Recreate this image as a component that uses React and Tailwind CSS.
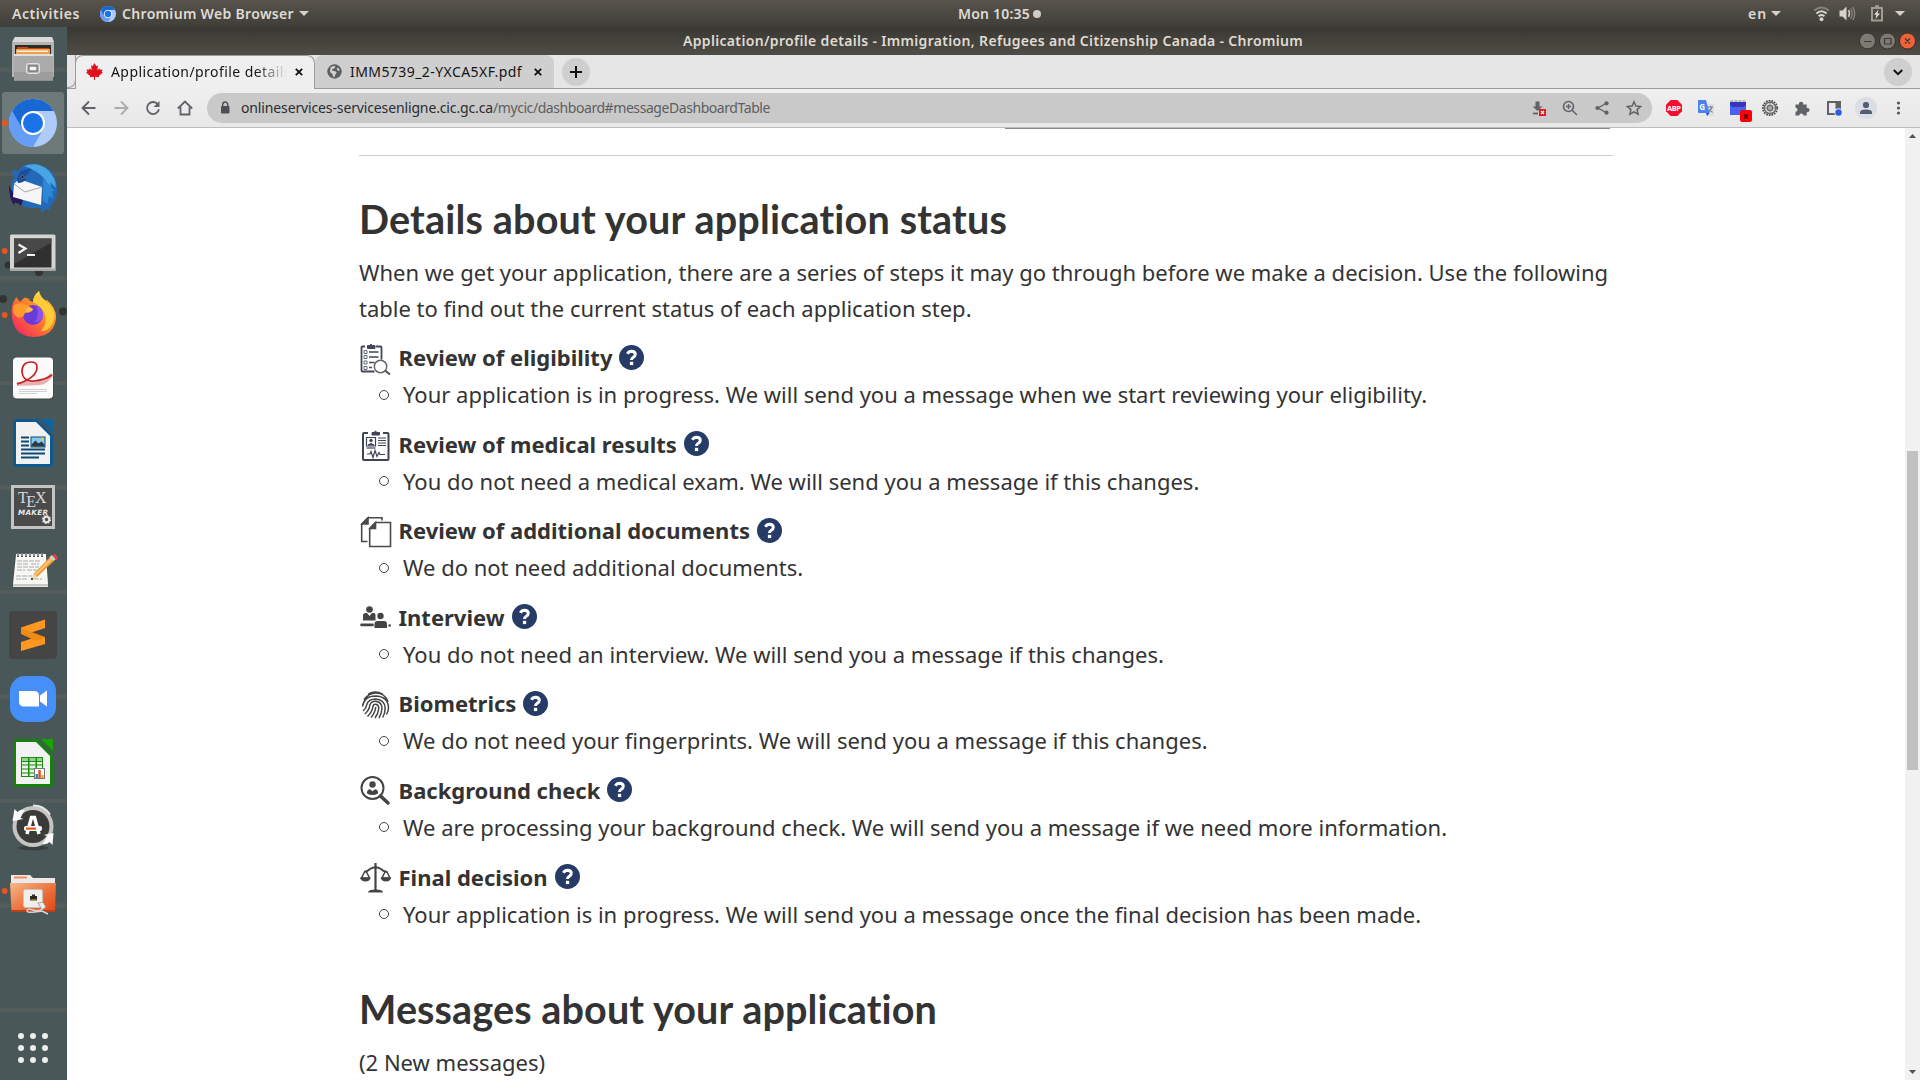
import { useLayoutEffect, useRef, useState } from "react";

/* Single-line label that tracks its letters to fill a given width. */
function Label({ width, className = "", children }) {
  const ref = useRef(null);
  const [spacing, setSpacing] = useState(0);
  useLayoutEffect(() => {
    const el = ref.current;
    const natural = el.getBoundingClientRect().width - spacing * el.textContent.length;
    setSpacing((width - natural) / el.textContent.length);
  }, [width]);
  return (
    <span ref={ref} className={`inline-block whitespace-nowrap ${className}`} style={{ letterSpacing: `${spacing}px` }}>
      {children}
    </span>
  );
}

function ChromiumMark({ className }) {
  return (
    <svg viewBox="0 0 48 48" className={className}>
      <circle cx="24" cy="24" r="24" fill="#aecbfa" />
      <path d="M24 24 L3.2 12 A24 24 0 0 0 24 48 L34.4 30 Z" fill="#669df6" />
      <path d="M3.2 12 A24 24 0 0 1 44.8 12 L24 12 L13.6 30 Z" fill="#1967d2" />
      <circle cx="24" cy="24" r="12" fill="#fff" />
      <circle cx="24" cy="24" r="9.7" fill="#1a73e8" />
    </svg>
  );
}

function TopBar() {
  return (
    <header className="flex h-[27px] items-center bg-linear-to-b from-[#58544c] to-[#403e39] text-[14px] leading-[27px] font-semibold text-[#dfdbd2]">
      <Label width={68} className="ml-3">Activities</Label>
      <ChromiumMark className="ml-5 size-4" />
      <Label width={172} className="ml-[6px]">Chromium Web Browser</Label>
      <Caret className="ml-[5px]" />
      <Label width={72} className="ml-[649px]">Mon 10:35</Label>
      <span className="ml-[3px] size-2 rounded-full bg-[#d0ccc4]" />
      <Label width={19} className="ml-[707px]">en</Label>
      <Caret className="ml-1" />
      <svg className="ml-8 h-[17px] w-[17px]" viewBox="0 0 17 17" fill="none" strokeWidth="2">
        <path d="M1.2 5.6 Q8.5 -0.6 15.8 5.6" stroke="#85827b" />
        <path d="M3.4 8.6 Q8.5 4 13.6 8.6" stroke="#d6d2ca" />
        <path d="M5.6 11.2 Q8.5 8.8 11.4 11.2" stroke="#d6d2ca" />
        <circle cx="8.5" cy="14.2" r="2" fill="#d6d2ca" />
      </svg>
      <svg className="ml-[9px] h-[17px] w-[17px]" viewBox="0 0 17 17" fill="none">
        <path d="M0.5 5.5h3L7.5 1.5v14l-4-4h-3z" fill="#d6d2ca" />
        <path d="M9.5 5.2q2 3.3 0 6.6" stroke="#d6d2ca" strokeWidth="1.4" />
        <path d="M11.6 3.4q3 5.1 0 10.2M13.7 1.8q4 6.7 0 13.4" stroke="#85827b" strokeWidth="1.4" />
      </svg>
      <svg className="ml-[14px] h-[17px] w-[14px]" viewBox="0 0 14 17" fill="none">
        <path d="M2 3h10v12.5H2zM5 1.2h4" stroke="#a09c94" strokeWidth="2" />
        <path d="M8.6 4.5 4 9.8h2.4L5.4 14 10 8.6H7.4z" fill="#e4e0d8" />
      </svg>
      <Caret className="ml-[11px]" />
    </header>
  );
}

function Caret({ className }) {
  return (
    <svg className={`h-[5px] w-[10px] ${className}`} viewBox="0 0 10 5">
      <path d="M0 0h10L5 5z" fill="#d6d2ca" />
    </svg>
  );
}

const DOCK_ICONS = [
  {
    name: "Files",
    art: (
      <>
        <path d="M15 37h37l2 6v34H12V43z" fill="#b4b4b4" />
        <path d="M15 37h37l2 5H12z" fill="#d8d8d8" />
        <rect x="15" y="45" width="36" height="10" fill="#2d2a28" />
        <path d="M17 47h10l2 1h20v3H17z" fill="#c4481a" />
        <rect x="16" y="49" width="34" height="6" fill="#f0a04a" />
        <rect x="17" y="50.500" width="31" height="1.500" fill="#fff3dc" />
        <path d="M14 54h39v26.500H14z" fill="#ababab" />
        <path d="M14 54h39v2H14z" fill="#dedede" />
        <path d="M14 72h39v8.500H14z" fill="#9d9d9d" />
        <rect x="26.500" y="63.500" width="13" height="10" rx="2" fill="#b5b5b5" stroke="#e4e4e4" />
        <rect x="29" y="66" width="8" height="5" fill="#f4f4f4" stroke="#555" />
      </>
    ),
  },
  {
    name: "Chromium",
    running: 123,
    art: (
      <>
        <rect x="2" y="92" width="62" height="62" rx="3" fill="#6e797a" />
        <svg x="9" y="99" width="48" height="48" viewBox="0 0 48 48">
          <circle cx="24" cy="24" r="24" fill="#aecbfa" />
          <path d="M24 24 L3.200 12 A24 24 0 0 0 24 48 L34.400 30 Z" fill="#669df6" />
          <path d="M3.200 12 A24 24 0 0 1 44.800 12 L24 12 L13.600 30 Z" fill="#1967d2" />
          <circle cx="24" cy="24" r="12" fill="#fff" />
          <circle cx="24" cy="24" r="10" fill="#1a73e8" />
        </svg>
      </>
    ),
  },
  {
    name: "Thunderbird",
    art: (
      <>
        <path d="M10 172q4-3 8-1 6-9 17-7q16 2 20 14l2 8q1 12-5 18l-3 6-2-1-6 4 0-5-12 0q-14-4-18-16q-1-9 4-16z" fill="#2469b8" />
        <path d="M24 166q14-5 24 4q8 8 8 18l-6-6 2 10-8-14q-8-8-20-12z" fill="#47a5e4" />
        <path d="M9 185q4 11 14 15l-2 6q-3-4-7-3l1 3q-6-5-6-21z" fill="#261a5c" />
        <path d="M14 184l5-5 23 8-1 18-28-8z" fill="#f6f6f6" />
        <path d="M14 184l11 8 17-5" stroke="#a8a8a8" fill="none" />
        <path d="M17 180q2-13 15-11l-8 9 3 1q-4 4-9 4z" fill="#1b4f9c" />
        <circle cx="22.500" cy="177" r="1.600" fill="#1b1b2c" stroke="#a07048" strokeWidth=".8" />
        <path d="M43 178l12 13-3 0 1 7-4-2-2 8-4-4z" fill="#2e86d6" />
      </>
    ),
  },
  {
    name: "Terminal",
    running: 251,
    art: (
      <>
        <circle cx="8" cy="265" r="3.500" fill="#303331" />
        <circle cx="39" cy="272" r="4" fill="#303331" />
        <rect x="10" y="234.500" width="45.500" height="36.500" rx="1.500" fill="#d4d4d2" />
        <rect x="10" y="268.500" width="45.500" height="2.500" fill="#a8a8a6" />
        <rect x="14" y="238.500" width="37.500" height="29" fill="#303030" />
        <path d="M14 238.500h37.500v4L14 264z" fill="#484848" />
        <path d="M18.500 244.500l7 4-7 4.500M27 255h8" stroke="#f2f2f2" strokeWidth="2.200" fill="none" />
      </>
    ),
  },
  {
    name: "Firefox",
    running: 315,
    art: (
      <>
        <circle cx="3" cy="299" r="4" fill="#303331" />
        <circle cx="63" cy="311.500" r="4" fill="#303331" />
        <path d="M13 303q2-3 3-6l4 5 4-4q4-1 6 3l3 1q0-6 6-11q1 6 7 10l1-1q9 8 9 17q-1 19-22 20q-20-1-22-20q-1-8 1-14z" fill="url(#fx)" />
        <path d="M33 302q0-6 6-11q1 6 7 10l1 3 1-1q9 10 5 19-4 10-12 9 7-8 4-17-4-8-12-12z" fill="#ffd43a" opacity=".85" />
        <circle cx="33" cy="315" r="10" fill="#6a3bd8" />
        <path d="M36 305q8 3 7 11-2 7-8 6 5-7 1-17z" fill="#8c52f0" />
        <path d="M14 305q8-5 19 4-1 4-8 4-2 6-8 4-6-4-3-12z" fill="#ff9a2e" />
        <path d="M28 307l5 2q-1 3-8 3z" fill="#ffbd4f" />
      </>
    ),
  },
  {
    name: "Document viewer",
    art: (
      <>
        <rect x="13.500" y="358.500" width="40" height="41" rx="4" fill="#30383a" opacity=".6" />
        <rect x="13" y="357.500" width="40" height="41" rx="4" fill="#fbfbfb" />
        <path d="M17 384q20-1 23-1 6 0 12-9" fill="none" stroke="#e8b0b0" strokeWidth="4" />
        <path d="M17 384q20-6 20-17 0-5-6-5-9 0-9 10 1 10 12 9 11-1 18-6" fill="none" stroke="#c72020" strokeWidth="1.700" />
        <path d="M19 389.500h28M19 391.500h28M19 393.500h18" stroke="#d0d0d0" />
      </>
    ),
  },
  {
    name: "LibreOffice Writer",
    art: (
      <>
        <path d="M15 419h27l11 12v33q0 3-3 3H16q-3 0-3-3v-42z" fill="#0d5a92" />
        <path d="M41 419h12v12z" fill="#12639c" />
        <path d="M39 420l14 14" stroke="#4a5557" strokeWidth="2" />
        <path d="M16 422h20l14 14v28H16z" fill="#f2f2f2" />
        <path d="M21 437.500h8M21 441.500h8M21 445.500h8M21 449.500h24M21 453.500h24M21 457.500h18" stroke="#0c4a78" strokeWidth="2" />
        <rect x="31" y="437" width="14" height="10" fill="#86c8f0" stroke="#0c4a78" />
        <path d="M31.500 446.500v-2l4-4 3 3 3-2 3 3v2z" fill="#2b3b42" />
        <circle cx="42.500" cy="439" r="1.600" fill="#f0c828" />
      </>
    ),
  },
  {
    name: "Texmaker",
    art: (
      <>
        <rect x="11" y="485" width="44" height="44" fill="#c3c3c3" />
        <rect x="14" y="488" width="38" height="38" fill="#4b4b4b" />
        <text x="18" y="503" fill="#dadada" fontFamily="Liberation Serif, serif" fontSize="16">
          T<tspan dx="-1.500" dy="3.500">E</tspan><tspan dx="-1" dy="-3.500">X</tspan>
        </text>
        <text x="18" y="514.500" fill="#e8e8e8" fontFamily="DejaVu Sans, sans-serif" fontSize="7.200" fontWeight="bold" fontStyle="italic" textLength="30">MAKER</text>
        <circle cx="46.500" cy="519.500" r="2.700" fill="none" stroke="#e4e4e4" strokeWidth="2" />
        <circle cx="46.500" cy="519.500" r="4" fill="none" stroke="#e4e4e4" strokeWidth="1.200" strokeDasharray="1.600 1.500" />
      </>
    ),
  },
  {
    name: "Text editor",
    art: (
      <>
        <path d="M15 555h32l1 32H12.500z" fill="#2f3334" opacity=".7" />
        <path d="M16 554h30l2 30v3H13v-3z" fill="#f7f7f3" />
        <path d="M13 584h35v2.500H13z" fill="#c9c9c4" />
        <path d="M18 553v4M22 553v4M26 553v4M30 553v4M34 553v4M38 553v4M42 553v4" stroke="#444" strokeWidth="1.800" />
        <path d="M18 553v3M22 553v3M26 553v3M30 553v3M34 553v3M38 553v3M42 553v3" stroke="#ddd" strokeWidth=".8" />
        <path d="M17 561h24M17 564h12M31 564h8M17 567h22M17 570h8M27 570h10M16 576h16M16 579h12M34 579h8" stroke="#a9a9a9" strokeDasharray="5 1" />
        <path d="M34 573.500L50 557l4 4-17 16-5 2z" fill="#f09a32" />
        <path d="M35 574L51 558l1.500 1.500L36 575.500z" fill="#ffc878" />
        <path d="M49.500 557l2.500-2 4 4-2.500 2z" fill="#cfd2d4" />
        <path d="M52 555q3-2 5 1t-1 4z" fill="#e0423c" />
        <path d="M34 573.500l3 3.500-6 2.500z" fill="#f2d8b0" />
        <circle cx="32" cy="579" r="1.100" fill="#222" />
      </>
    ),
  },
  {
    name: "Sublime Text",
    art: (
      <>
        <rect x="9" y="611" width="48" height="48" rx="4" fill="#454545" />
        <path d="M21 627.500L45 619.500v8.500l-15 5 15 4.500v6.500L21 651v-9l14-4.500L21 633z" fill="#ff9721" />
        <path d="M21 628l24 9v1l-9 3-15-7z" fill="#f08a12" />
      </>
    ),
  },
  {
    name: "Zoom",
    art: (
      <>
        <rect x="10" y="676" width="46" height="46" rx="15" fill="#478ff8" />
        <path d="M19 691h15q5 0 5 5v10.500H24q-5 0-5-5z" fill="#fff" />
        <path d="M40 695.500l7-5v16l-7-5z" fill="#fff" />
      </>
    ),
  },
  {
    name: "LibreOffice Calc",
    art: (
      <>
        <path d="M15 739h27l11 12v33q0 3-3 3H16q-3 0-3-3v-42z" fill="#15820e" />
        <path d="M41 739h12v12z" fill="#18a303" />
        <path d="M39 740l14 14" stroke="#4a5557" strokeWidth="2" />
        <path d="M16 742h20l14 14v28H16z" fill="#f2f2f2" />
        <rect x="21" y="757" width="22" height="20" fill="#1d8a12" />
        <path d="M22 758h6v3h-6zM29.500 758h6v3h-6zM37 758h5v3h-5z" fill="#8fd68a" />
        <path d="M22 762h6v2.500h-6zM29.500 762h6v2.500h-6zM37 762h5v2.500h-5zM22 765.500h6v3h-6zM29.500 765.500h6v3h-6zM37 765.500h5v3h-5zM22 769.500h6v3h-6zM29.500 769.500h5v3h-5zM22 773.500h6v2.500h-6zM29.500 773.500h5v2.500h-5z" fill="#e8f6e6" />
        <rect x="34.500" y="768.500" width="10" height="10" fill="#fff" stroke="#777" />
        <path d="M35.500 774h2.500v4h-2.500z" fill="#2b8fd0" />
        <path d="M38.300 770h2.500v8h-2.500z" fill="#d8581c" />
        <path d="M41.200 775h2.500v3h-2.500z" fill="#e8a628" />
      </>
    ),
  },
  {
    name: "Software Updater",
    art: (
      <>
        <ellipse cx="33" cy="848" rx="15" ry="2.500" fill="#39413f" />
        <circle cx="33" cy="826.500" r="18.500" fill="#3a3a38" stroke="#c4c4c2" strokeWidth="4" />
        <path d="M33 805.500q11 0 17 9" fill="none" stroke="#e6e6e4" strokeWidth="2" />
        <path d="M12.500 821l2-12 3 3q3-3 7-2l-4 8 3 1z" fill="#fafafa" />
        <path d="M53.500 833l-1 12-3-3q-3 3-7 2l5-8-4-1z" fill="#fafafa" />
        <path d="M27 834l4.500-16.500h3L39 834" fill="none" stroke="#fff" strokeWidth="3.500" />
        <rect x="24" y="826" width="18" height="5" rx="2" fill="#fff" />
        <rect x="26" y="827.500" width="10" height="2.200" fill="#e8581c" />
      </>
    ),
  },
  {
    name: "Remote folder",
    running: 891,
    art: (
      <>
        <path d="M11 875h19l3 3h22v6H11z" fill="#eceae8" />
        <path d="M14 877.500h13" stroke="#f08a5a" strokeWidth="2" />
        <path d="M10 883h46l-1 29H11.500z" fill="url(#folder)" />
        <path d="M11 910h44v2H11z" fill="#b8431a" />
        <rect x="23.500" y="889.500" width="19" height="18" rx="2" fill="#efeeec" stroke="#c8c4c0" />
        <path d="M30 896h2v-1.500h3v1.500h2v4.500h-7z" fill="#2c2c28" />
        <path d="M30.500 900h6" stroke="#d8b828" />
        <path d="M38 903l5-1 3 5-4 3z" fill="#e9e9e6" stroke="#8a8a88" strokeWidth=".7" />
        <path d="M42 909q-4 3-9 1-6-2-6 1 0 2 8 1l7-1 6 3" fill="none" stroke="#d5d5d2" strokeWidth="1.500" />
      </>
    ),
  },
];

function Dock() {
  return (
    <aside className="relative flex w-[67px] flex-none flex-col bg-[#4a5759]">
      <div className="pointer-events-none absolute inset-0 bg-[repeating-linear-gradient(to_bottom,transparent_0px,transparent_40px,#555d5c_41px,#555d5c_44px,transparent_45px,transparent_104.500px)]" />
      {DOCK_ICONS.map((icon, i) => (
        <svg key={icon.name} aria-label={icon.name} className="relative h-16 w-[67px] flex-none overflow-visible" viewBox={`0 ${27 + i * 64} 67 64`}>
          <defs>
            <linearGradient id="fx" x1="1" y1="0" x2="0" y2="1">
              <stop offset="0" stopColor="#ffe03a" />
              <stop offset=".45" stopColor="#ff8426" />
              <stop offset="1" stopColor="#f5156c" />
            </linearGradient>
            <linearGradient id="folder" x1="0" y1="0" x2="1" y2="1">
              <stop offset="0" stopColor="#f6b98a" />
              <stop offset=".6" stopColor="#ea6a35" />
              <stop offset="1" stopColor="#e2481a" />
            </linearGradient>
          </defs>
          {icon.art}
          {icon.running && <circle cx="4.700" cy={icon.running} r="2.900" fill="#e95420" />}
        </svg>
      ))}
      <div className="relative mt-auto mb-[17px] ml-[18px] grid w-[30px] grid-cols-3 gap-[6px]">
        {Array.from({ length: 9 }, (_, i) => (
          <span key={i} className="size-[6px] rounded-full bg-[#eeeeec]" />
        ))}
      </div>
    </aside>
  );
}

function TitleBar() {
  return (
    <div className="flex h-7 items-center bg-linear-to-b from-[#3a3833] to-[#504d46] text-[14px] font-semibold text-[#dfdbd2]">
      <Label width={620} className="mb-[2px] ml-[616px]">
        Application/profile details - Immigration, Refugees and Citizenship Canada - Chromium
      </Label>
      <svg className="mr-[4px] ml-auto h-[18px] w-[57px]" viewBox="0 0 57 18" fill="none">
        <g stroke="#33312d">
          <circle cx="8.500" cy="9" r="8" fill="#7d7a73" />
          <circle cx="28.500" cy="9" r="8" fill="#7d7a73" />
          <circle cx="48.500" cy="9" r="8" fill="#ee6238" />
        </g>
        <path d="M5 9.500h7.500M25.500 6.500h6.500v5.500h-6.500zM46 6.500l5 5M51 6.500l-5 5" stroke="#3c3a35" strokeWidth="1.200" />
      </svg>
    </div>
  );
}

function CloseMark({ className }) {
  return (
    <svg className={`size-2 ${className}`} viewBox="0 0 8 8">
      <path d="M.8 .8l6.400 6.400M7.200 .8L.8 7.200" stroke="#111" strokeWidth="1.800" />
    </svg>
  );
}

function TabStrip() {
  return (
    <div className="flex h-[34px] items-start border-b border-[#9c9c9c] bg-[#e6e6e6] text-[14px] text-[#151515]">
      <div className="h-[33px] w-[9px] flex-none rounded-br-lg border-r border-b border-[#9c9c9c]" />
      <div className="relative -ml-px flex h-[34px] w-[240px] flex-none items-center rounded-t-lg border border-b-0 border-[#9c9c9c] bg-[#efefef] pb-[2px]">
        <svg className="ml-[10px] size-[17px]" viewBox="0 0 17 17">
          <path d="M8.500 0l1.800 3.200 1.700-.9-.7 5 2.200-2 .5 1.400 2.500-.3-.8 2.500 1.200.7-4.100 3.300.4 1.400-4.200-.6V17h-1v-3.300l-4.200.6.400-1.400L0 9.600l1.300-.7L.5 6.400l2.500.3.500-1.400 2.200 2-.7-5 1.700.9z" fill="#e0101c" />
        </svg>
        <div className="ml-2 w-[177px] overflow-hidden [mask-image:linear-gradient(to_right,black_145px,transparent_176px)]">
          <Label width={180}>Application/profile details</Label>
        </div>
        <CloseMark className="ml-[7px]" />
      </div>
      <div className="flex h-[33px] w-[239px] flex-none items-center rounded-t-lg bg-[#cfcfcf]">
        <svg className="ml-3 size-[15px]" viewBox="0 0 15 15">
          <circle cx="7.500" cy="7.500" r="7.200" fill="#5b5f63" />
          <path d="M3.500 3.500Q6 1.800 8.500 2.200L7.200 4.500 5 5.300l.5 1.500 3 .4 1.200 1.500-1.400 2-1 2.500-1.300-.5-.4-2.500L3 8z" fill="#cfcfcf" />
          <path d="M10.500 3.200l2.300 2.500-1.200 1.200-1.800-1.200z" fill="#cfcfcf" />
        </svg>
        <Label width={172} className="ml-2">IMM5739_2-YXCA5XF.pdf</Label>
        <CloseMark className="ml-3" />
      </div>
      <div className="mt-[3px] ml-2 flex size-7 items-center justify-center rounded-full bg-[#cfcfcf]">
        <svg className="size-3" viewBox="0 0 12 12">
          <path d="M6 0v12M0 6h12" stroke="#111" strokeWidth="2" />
        </svg>
      </div>
      <div className="mt-[3px] mr-2 ml-auto flex size-7 items-center justify-center rounded-full bg-[#cfcfcf]">
        <svg className="h-[7px] w-[10px]" viewBox="0 0 10 7">
          <path d="M.8 1l4.200 4.200L9.200 1" stroke="#111" strokeWidth="2" fill="none" />
        </svg>
      </div>
    </div>
  );
}

function ToolIcon({ children, className = "" }) {
  return (
    <svg className={`size-4 flex-none overflow-visible ${className}`} viewBox="0 0 16 16" fill="none" stroke="#5f6368" strokeWidth="1.800">
      {children}
    </svg>
  );
}

function Toolbar() {
  return (
    <div className="flex h-[39px] items-center border-b border-[#bdbdbd] bg-linear-to-b from-[#efefef] to-[#e8e8e8] pr-[14px]">
      <div className="ml-[14px] flex flex-none items-center gap-4">
        <ToolIcon><path d="M14.500 8H2M8 1.500L1.500 8 8 14.500" /></ToolIcon>
        <ToolIcon><path d="M1.500 8H14M8 1.500L14.500 8 8 14.500" stroke="#a9abad" /></ToolIcon>
        <ToolIcon>
          <path d="M13.200 4.800A6 6 0 1 0 14 9.200" />
          <path d="M14.500 1v6h-6z" fill="#5f6368" stroke="none" />
        </ToolIcon>
        <ToolIcon><path d="M.8 8.500L8 1.500l7.200 7M3.500 7v7.500h9V7" /></ToolIcon>
      </div>
      <div className="ml-[14px] flex h-[30px] w-[1445px] flex-none items-center rounded-full bg-[#c9c9c9] pr-[10px] pl-[10px]">
        <ToolIcon>
          <rect x="4" y="6" width="8.500" height="7.500" rx="1" fill="#4c5054" stroke="none" />
          <path d="M5.700 6V4.500a2.500 2.500 0 0 1 5 0V6" stroke="#4c5054" strokeWidth="1.400" />
        </ToolIcon>
        <div className="ml-2 flex text-[14px] leading-[30px]">
          <Label width={252} className="text-[#2b2d30]">onlineservices-servicesenligne.cic.gc.ca</Label>
          <Label width={277} className="text-[#5c5e60]">/mycic/dashboard#messageDashboardTable</Label>
        </div>
        <div className="ml-auto flex gap-4">
          <ToolIcon>
            <path d="M5.500 1.500h4v5h3L7.500 11l-5-4.500h3z" fill="#5f6368" stroke="none" />
            <path d="M3 13.500h5" />
            <rect x="9" y="9" width="7" height="7" fill="#e5141e" stroke="none" />
            <path d="M11 11l3 3M14 11l-3 3" stroke="#fff" strokeWidth="1.200" />
          </ToolIcon>
          <ToolIcon>
            <circle cx="6.500" cy="6.500" r="5" strokeWidth="1.600" />
            <path d="M10.200 10.200l4.800 4.800M4 6.500h5M6.500 4v5" strokeWidth="1.400" />
          </ToolIcon>
          <ToolIcon>
            <path d="M12 3.500L4 8l8 4.500" strokeWidth="1.300" />
            <g fill="#5f6368" stroke="none">
              <circle cx="12.500" cy="3.300" r="2.100" /><circle cx="3.500" cy="8" r="2.100" /><circle cx="12.500" cy="12.700" r="2.100" />
            </g>
          </ToolIcon>
          <ToolIcon><path d="M8 1.800l1.900 4.300 4.700.4-3.500 3.100 1 4.600L8 11.800l-4.100 2.400 1-4.600L1.400 6.500l4.700-.4z" strokeWidth="1.500" /></ToolIcon>
        </div>
      </div>
      <div className="ml-auto flex items-center gap-4">
        <ToolIcon>
          <path d="M4.700 0h6.600L16 4.700v6.600L11.300 16H4.700L0 11.300V4.700z" fill="#f40d2c" stroke="none" />
          <text x="1" y="10.800" fill="#fff" stroke="none" fontSize="7.600" fontWeight="bold" fontFamily="Open Sans, sans-serif" textLength="14">ABP</text>
        </ToolIcon>
        <ToolIcon>
          <path d="M7 4h9v12H9z" fill="#dcdfe2" stroke="none" />
          <path d="M0 0h8l3.500 13H1q-1 0-1-1z" fill="#4a83f0" stroke="none" />
          <path d="M8 13h3.500L9 16z" fill="#3a3ad0" stroke="none" />
          <text x="1.300" y="9.500" fill="#fff" stroke="none" fontSize="8" fontWeight="bold" fontFamily="Open Sans, sans-serif">G</text>
          <path d="M10 7h5M12.500 6v1M14 7q-1 3-3 5M11.500 9l3 3.500" stroke="#68808c" strokeWidth="1.100" />
        </ToolIcon>
        <ToolIcon>
          <path d="M.5 1h15" stroke="#b8b8bc" strokeDasharray="3 1" />
          <path d="M0 2h16v13H0z" fill="#4a62ee" stroke="none" />
          <path d="M0 2h16v3l-2 2H2L0 5z" fill="#3536bc" stroke="none" />
          <rect x="10" y="10" width="12" height="12" rx="2" fill="#fb0007" stroke="none" />
          <path d="M14.300 14.500l3.400 4M17.700 14.500l-3.400 4" stroke="#3a0505" strokeWidth="1.500" />
        </ToolIcon>
        <ToolIcon>
          <circle cx="8" cy="8" r="7.200" stroke="#444" strokeWidth="1.800" strokeDasharray="1.600 1.100" />
          <circle cx="8" cy="8" r="5.700" fill="#ddd" stroke="#666" strokeWidth="1.400" />
          <circle cx="8" cy="8" r="2.700" fill="#aaa" stroke="#666" strokeWidth="1.200" />
          <path d="M8 2.500v3M8 10.500v3M2.500 8h3M10.500 8h3" stroke="#888" strokeWidth="1" />
        </ToolIcon>
        <ToolIcon>
          <path d="M1.500 4.500H5a2.200 2.200 0 1 1 4.200 0h3.500V8a2.200 2.200 0 1 1 0 4.200v3.300H9.500a2.100 2.100 0 0 0-4.200 0H1.500v-3.800a2 2 0 0 0 0-4z" fill="#5f6368" stroke="none" />
        </ToolIcon>
        <ToolIcon>
          <path d="M2 2h12v12H2z" strokeWidth="2" />
          <path d="M9.500 1H15v8H9.500z" fill="#5f6368" stroke="none" />
          <circle cx="12.500" cy="12.500" r="4.200" fill="#ececec" stroke="none" />
          <circle cx="12.500" cy="12.500" r="3.200" fill="#2a5bea" stroke="none" />
        </ToolIcon>
        <ToolIcon>
          <circle cx="8" cy="8" r="11" fill="#dcdee5" stroke="none" />
          <circle cx="8" cy="5" r="3.100" fill="#525d73" stroke="none" />
          <path d="M2 14v-1.500Q2 9.500 8 9.500t6 3V14z" fill="#525d73" stroke="none" />
        </ToolIcon>
        <ToolIcon>
          <g fill="#54585c" stroke="none">
            <circle cx="8.500" cy="3" r="1.600" /><circle cx="8.500" cy="8" r="1.600" /><circle cx="8.500" cy="13" r="1.600" />
          </g>
        </ToolIcon>
      </div>
    </div>
  );
}

const STEPS = [
  {
    title: "Review of eligibility",
    detail: "Your application is in progress. We will send you a message when we start reviewing your eligibility.",
    icon: (
      <g fill="none" stroke="#43475a">
        <path d="M5 3.500H2.500Q1.500 3.500 1.500 4.500v23q0 1 1 1h12M16 3.500h4.500q1 0 1 1v12" strokeWidth="1.800" />
        <path d="M7.500 2.500h2q1.500-2.500 3 0h2.500v3h-7.500z" fill="#43475a" />
        <path d="M9 9h9.500M9 14h9.500M9 19.500h5.500M9 24.500h3" strokeWidth="1.500" />
        <path d="M4 7.500h3v3H4zM4 12.500h3v3H4zM4 18h3v3H4zM4 23.500h3v3H4z" strokeWidth=".8" />
        <circle cx="20.500" cy="23.500" r="6.200" stroke="#666" strokeWidth="1.500" fill="#fff" />
        <path d="M25 27.500l5 4" stroke="#555" strokeWidth="2.200" />
      </g>
    ),
  },
  {
    title: "Review of medical results",
    detail: "You do not need a medical exam. We will send you a message if this changes.",
    icon: (
      <g fill="none" stroke="#3e4356">
        <path d="M8 4H4q-1 0-1 1V30q0 1 1 1h23.500q1 0 1-1V5q0-1-1-1h-4.500" strokeWidth="2" />
        <path d="M12 3.500h2q1.500-2.500 3 0h2.500V6H12z" fill="#3e4356" />
        <path d="M6.500 8.500h9v8.500h-9z" strokeWidth="1.200" />
        <circle cx="11" cy="11.500" r="1.300" fill="#3e4356" />
        <path d="M8 16q3-3 6 0z" fill="#3e4356" />
        <path d="M18 9h8M18 11.500h8M18 14h8M18 16.500h8" strokeWidth="1.200" />
        <path d="M6.500 19h9" strokeWidth="1.200" />
        <path d="M7 25h3l1-2.500 2 6 2-7 2 6 2-4 1 2h5" strokeWidth="1.200" />
      </g>
    ),
  },
  {
    title: "Review of additional documents",
    detail: "We do not need additional documents.",
    icon: (
      <g fill="none" stroke="#4a4a4a" strokeWidth="1.600">
        <path d="M7.500 25.500H1.700V8L8 1.700h14V4.500" />
        <path d="M2 8L8 2v6z" fill="#4a4a4a" />
        <path d="M9.700 12.500L15.500 6.500h15V30.500H9.700z" fill="#fff" />
        <path d="M10 12.500l5.500-6v6z" fill="#4a4a4a" />
      </g>
    ),
  },
  {
    title: "Interview",
    detail: "You do not need an interview. We will send you a message if this changes.",
    icon: (
      <g fill="#444">
        <circle cx="9.500" cy="7.500" r="3.300" />
        <path d="M3 18.500v-5q0-2.500 2.500-2.500h1.500l2.500 3 2.500-3h2q1.500 0 1.500 2v5.500z" />
        <rect x=".3" y="21.500" width="13.500" height="2.800" rx="1" />
        <circle cx="20.500" cy="14" r="3.200" />
        <path d="M14.500 26v-4q0-3 3-3h6.500q3 0 3 3v4z" />
        <circle cx="29.700" cy="23.500" r="1.300" />
      </g>
    ),
  },
  {
    title: "Biometrics",
    detail: "We do not need your fingerprints. We will send you a message if this changes.",
    icon: (
      <g fill="none" stroke="#444" strokeWidth="1.500">
        <path d="M8 5.300q7-4.500 15 0M4 10.500q5-6.500 12-6.500 9 0 12 9M2.500 17.500Q4 7 15.500 7 28 7.500 28.500 18.500 28.500 22 26.500 25.500" />
        <path d="M3 22Q6.500 19 6.800 15.500 8.500 10 15.500 10q9 .5 9.700 9 0 5-2.500 9.500" />
        <path d="M4.800 25q4.700-4 5-9 1.500-4 6-3.800 6 .8 6.200 7-.2 5-3 9.800M7.500 27.500q5-5 5.500-10.500.6-2 2.800-1.800 3 .5 3 4-.5 5.500-3.800 9.800M11 28.500q4-4.500 4.800-10.500" />
      </g>
    ),
  },
  {
    title: "Background check",
    detail: "We are processing your background check. We will send you a message if we need more information.",
    icon: (
      <g fill="none" stroke="#444">
        <circle cx="12.500" cy="13" r="11" strokeWidth="2" />
        <path d="M20.500 21l7.500 7" strokeWidth="3.500" strokeLinecap="round" />
        <circle cx="12.500" cy="9.500" r="3.200" fill="#444" stroke="none" />
        <path d="M7 18.500v-1q0-3 3-3.200l2.500 2 2.500-2q3 .2 3 3.200v1q-5.500 3-11 0z" fill="#444" stroke="none" />
      </g>
    ),
  },
  {
    title: "Final decision",
    detail: "Your application is in progress. We will send you a message once the final decision has been made.",
    icon: (
      <g fill="none" stroke="#444" strokeWidth="1.800">
        <path d="M15.500 1V28" strokeWidth="2.200" />
        <path d="M4 10q3 0 6-3 5.500-3.500 11 0 3 3 6 3" />
        <path d="M5 9L1.500 16h8L6 9M25.500 9L22 16h8L26.500 9" strokeWidth="1.500" />
        <path d="M0 15.500h10.500q-.5 4-5 4t-5.500-4zM20.500 15.500h10.500q-.5 4-5 4t-5.500-4z" fill="#444" stroke="none" />
        <path d="M8 30.500q0-3 7.500-3t7.500 3z" fill="#444" stroke="none" />
      </g>
    ),
  },
];

function HelpBadge() {
  return (
    <svg className="ml-[7px] size-[25px]" viewBox="0 0 25 25">
      <circle cx="12.500" cy="12.500" r="12.500" fill="#263b66" />
      <path d="M8.300 8.800Q9.800 6.200 12.500 6.200q3.700.1 3.800 3.100 0 1.900-2.300 3.200-1.500.9-1.500 2.600" fill="none" stroke="#fff" strokeWidth="3" />
      <rect x="10.900" y="16.800" width="3.300" height="3.300" fill="#fff" />
    </svg>
  );
}

function SectionHeading({ width, className, children }) {
  return (
    <h1 className={`font-['Lato',sans-serif] text-[39.600px] leading-[48px] font-bold [font-variant-ligatures:none] ${className}`}>
      <Label width={width}>{children}</Label>
    </h1>
  );
}

function Page() {
  return (
    <main className="flex min-h-0 flex-1 bg-white font-['Noto_Sans',sans-serif] text-[22px] leading-9 text-[#333]">
      <div className="min-w-0 flex-1 overflow-hidden pl-[292px]">
        <div className="w-[1254px]">
          <div className="mr-[3px] ml-auto h-px w-[605px] bg-[#8a8a8a]" />
          <hr className="mt-[26px] border-[#ccc]" />
          <SectionHeading width={648} className="mt-[39px]">Details about your application status</SectionHeading>
          <p className="mt-[11px]">
            When we get your application, there are a series of steps it may go through before we make a decision. Use the following table to find out the current status of each application step.
          </p>
          <ul className="mt-[13px]">
            {STEPS.map((step) => (
              <li key={step.title} className="h-[86.600px]">
                <div className="flex h-[36px] items-center">
                  <svg className="mt-[3px] ml-px h-8 w-8 flex-none overflow-visible" viewBox="0 0 32 32">{step.icon}</svg>
                  <h2 className="ml-[6.500px] font-bold">{step.title}</h2>
                  <HelpBadge />
                </div>
                <div className="mt-px flex h-9 items-center">
                  <span className="mt-px ml-5 size-[10px] rounded-full border border-[#444]" />
                  <p className="ml-[14px]">{step.detail}</p>
                </div>
              </li>
            ))}
          </ul>
          <SectionHeading width={578} className="mt-[40px]">Messages about your application</SectionHeading>
          <p className="mt-[11px]">(2 New messages)</p>
        </div>
      </div>
      <div className="flex w-[15px] flex-none flex-col items-center bg-[#f1f1f1]">
        <svg className="mt-[6px] h-1 w-[7px]" viewBox="0 0 7 4"><path d="M0 4h7L3.500 0z" fill="#505050" /></svg>
        <div className="mt-[313px] h-[319px] w-[11px] bg-[#c1c1c1]" />
        <svg className="mt-auto mb-[6px] h-1 w-[7px]" viewBox="0 0 7 4"><path d="M0 0h7L3.500 4z" fill="#505050" /></svg>
      </div>
    </main>
  );
}

export default function App() {
  return (
    <div className="flex h-[1080px] w-[1920px] flex-col overflow-hidden bg-[#403e39] font-['Noto_Sans',sans-serif]">
      <TopBar />
      <div className="flex min-h-0 flex-1">
        <Dock />
        <div className="flex min-w-0 flex-1 flex-col">
          <TitleBar />
          <TabStrip />
          <Toolbar />
          <Page />
        </div>
      </div>
    </div>
  );
}
